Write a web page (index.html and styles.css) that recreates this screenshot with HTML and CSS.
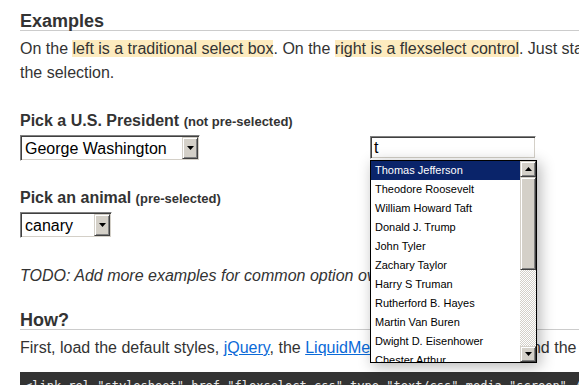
FILE: index.html
```html
<!DOCTYPE html>
<html lang="en">
<head>
<meta charset="utf-8">
<title>FlexSelect examples</title>
<link rel="stylesheet" href="styles.css">
</head>
<body>
<div class="page">
  <h2 class="section-title">Examples</h2>
  <p class="intro">On the <span class="hl">left is a traditional select box</span>. On the <span class="hl">right is a flexselect control</span>. Just start typing to make the selection.</p>

  <div class="example ex-president">
    <div class="example-label">Pick a U.S. President <small>(not pre-selected)</small></div>
    <div class="example-controls">
      <div class="native-col">
        <div class="win-select sel-president">
          <span class="win-select-value">George Washington</span>
          <span class="win-btn"><svg width="7" height="4" viewBox="0 0 7 4"><path d="M0 0h7L3.5 4z"/></svg></span>
        </div>
      </div>
      <div class="flex-col">
        <div class="win-input">t</div>
        <div class="flex-dropdown">
          <ul class="flex-list">
            <li class="active">Thomas Jefferson</li>
            <li>Theodore Roosevelt</li>
            <li>William Howard Taft</li>
            <li>Donald J. Trump</li>
            <li>John Tyler</li>
            <li>Zachary Taylor</li>
            <li>Harry S Truman</li>
            <li>Rutherford B. Hayes</li>
            <li>Martin Van Buren</li>
            <li>Dwight D. Eisenhower</li>
            <li>Chester Arthur</li>
            <li>Millard Fillmore</li>
          </ul>
          <div class="scrollbar">
            <span class="sb-btn"><svg width="7" height="4" viewBox="0 0 7 4"><path d="M0 4h7L3.5 0z"/></svg></span>
            <span class="sb-thumb"></span>
            <span class="sb-track"></span>
            <span class="sb-btn"><svg width="7" height="4" viewBox="0 0 7 4"><path d="M0 0h7L3.5 4z"/></svg></span>
          </div>
        </div>
      </div>
    </div>
  </div>

  <div class="example ex-animal">
    <div class="example-label">Pick an animal <small>(pre-selected)</small></div>
    <div class="example-controls">
      <div class="native-col">
        <div class="win-select sel-animal">
          <span class="win-select-value">canary</span>
          <span class="win-btn"><svg width="7" height="4" viewBox="0 0 7 4"><path d="M0 0h7L3.5 4z"/></svg></span>
        </div>
      </div>
      <div class="flex-col">
        <div class="win-input">canary</div>
      </div>
    </div>
  </div>

  <p class="todo">TODO: Add more examples for common option overrides.</p>

  <h2 class="section-title how">How?</h2>
  <p class="how-text">First, load the default styles, <a href="#">jQuery</a>, the <a href="#">LiquidMetal</a> library for scoring, and the plugin itself:</p>
  <pre class="code">&lt;link rel="stylesheet" href="flexselect.css" type="text/css" media="screen" /&gt;
&lt;script src="jquery.min.js" type="text/javascript"&gt;&lt;/script&gt;
&lt;script src="liquidmetal.js" type="text/javascript"&gt;&lt;/script&gt;
&lt;script src="jquery.flexselect.js" type="text/javascript"&gt;&lt;/script&gt;</pre>
</div>
</body>
</html>
```

FILE: styles.css
```css
html, body {
  margin: 0;
  padding: 0;
  overflow: hidden;
  background: #fff;
}

body {
  font-family: "Liberation Sans", Arial, sans-serif;
  font-size: 16px;
  line-height: 24px;
  color: #333;
}

.page {
  width: 692px;
  padding: 13px 0 0 20px;
}

.section-title {
  margin: 0;
  font-size: 18px;
  line-height: 17px;
  font-weight: bold;
  color: #333;
  border-bottom: 1px solid #ccc;
  width: 900px;
}

.intro {
  margin: 6px 0 0;
}

.hl {
  background: #fdebbf;
}

.example {
  margin-top: 24px;
}

.ex-animal {
  margin-top: 25px;
}

.example-label {
  font-weight: bold;
  line-height: 24px;
}

.example-label small {
  font-size: 13px;
}

.example-controls {
  display: flex;
  align-items: flex-start;
  margin-top: 1px;
}

.native-col {
  width: 350px;
  flex: none;
}

.flex-col {
  position: relative;
  flex: none;
}

/* Windows classic select */
.win-select {
  box-sizing: border-box;
  height: 26px;
  display: flex;
  border-style: solid;
  border-width: 1px;
  border-color: #808080 #fff #fff #808080;
  box-shadow: inset 1px 1px #404040, inset -1px -1px #d4d0c8;
  background: #fff;
  padding: 1px;
  color: #000;
}

.sel-president { width: 180px; }
.sel-animal { width: 92px; }

.win-select-value {
  flex: 1;
  padding: 1px 0 0 3px;
  line-height: 22px;
  font-size: 16px;
  white-space: nowrap;
  overflow: hidden;
}

.win-btn,
.sb-btn {
  box-sizing: border-box;
  width: 16px;
  flex: none;
  display: flex;
  align-items: center;
  justify-content: center;
  background: #d4d0c8;
  border-style: solid;
  border-width: 1px;
  border-color: #d4d0c8 #404040 #404040 #d4d0c8;
  box-shadow: inset 1px 1px #fff, inset -1px -1px #808080;
}

.win-btn {
  height: 22px;
}

.win-btn svg,
.sb-btn svg {
  display: block;
  fill: #000;
}

/* Windows classic text input */
.win-input {
  box-sizing: border-box;
  width: 166px;
  height: 23px;
  margin-top: 1px;
  border-style: solid;
  border-width: 1px;
  border-color: #808080 #fff #fff #808080;
  box-shadow: inset 1px 1px #404040, inset -1px -1px #d4d0c8;
  padding: 0 3px;
  font-size: 16px;
  line-height: 21px;
  color: #000;
  background: #fff;
}

/* flexselect dropdown */
.flex-dropdown {
  position: absolute;
  z-index: 10;
  top: 25px;
  left: 0;
  box-sizing: border-box;
  width: 167px;
  height: 203px;
  border: 1px solid #000;
  background: #fff;
  display: flex;
  box-shadow: 3px 3px 14px rgba(0, 0, 0, 0.3);
}

.flex-list {
  list-style: none;
  margin: 0;
  padding: 0;
  flex: 1;
  overflow: hidden;
  font-size: 11px;
  line-height: 19px;
  color: #000;
}

.flex-list li {
  padding-left: 4px;
  height: 19px;
  white-space: nowrap;
}

.flex-list li.active {
  background: #0a246a;
  color: #fff;
}

.scrollbar {
  width: 16px;
  flex: none;
  display: flex;
  flex-direction: column;
}

.sb-btn {
  height: 16px;
}

.sb-thumb {
  box-sizing: border-box;
  height: 93px;
  background: #d4d0c8;
  border-style: solid;
  border-width: 1px;
  border-color: #d4d0c8 #404040 #404040 #d4d0c8;
  box-shadow: inset 1px 1px #fff, inset -1px -1px #808080;
}

.sb-track {
  flex: 1;
  background-color: #fff;
  background-image: conic-gradient(#d4d0c8 25%, #fff 0 50%, #d4d0c8 0 75%, #fff 0);
  background-size: 2px 2px;
}

.todo {
  margin: 26px 0 0;
  font-style: italic;
}

.how {
  margin-top: 24px;
}

.how-text {
  margin: 6px 0 0;
  white-space: nowrap;
}

.how-text a {
  color: #0b6ad8;
  text-decoration: underline;
}

.code {
  margin: 12px 0 0;
  width: 900px;
  background: #333;
  color: #e8e8e8;
  font-family: "DejaVu Sans Mono", "Liberation Mono", monospace;
  font-size: 12px;
  line-height: 18px;
  padding: 5px 5px;
}
```
